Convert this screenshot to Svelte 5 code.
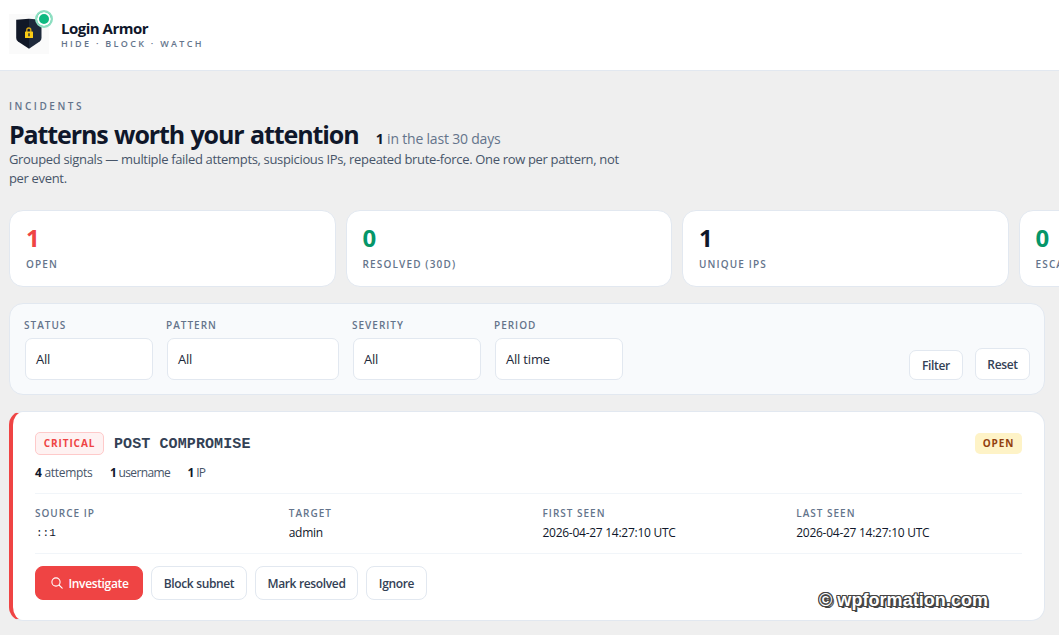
<script>
  const stats = [
    { value: 1, label: 'Open', tone: 'danger' },
    { value: 0, label: 'Resolved (30d)', tone: 'ok' },
    { value: 1, label: 'Unique IPs', tone: '' },
    { value: 0, label: 'Escalated', tone: 'ok' }
  ];

  const filters = [
    { label: 'Status', value: 'All' },
    { label: 'Pattern', value: 'All', wide: true },
    { label: 'Severity', value: 'All' },
    { label: 'Period', value: 'All time' }
  ];

  const counts = [
    { n: 4, what: 'attempts' },
    { n: 1, what: 'username' },
    { n: 1, what: 'IP' }
  ];

  const details = [
    { label: 'Source IP', value: '::1', kind: 'mono' },
    { label: 'Target', value: 'admin', kind: 'user' },
    { label: 'First seen', value: '2026-04-27 14:27:10 UTC', kind: 'date' },
    { label: 'Last seen', value: '2026-04-27 14:27:10 UTC', kind: 'date' }
  ];
</script>

<div class="page">
  <header>
    <div class="logo">
      <svg width="40" height="40" viewBox="0 0 40 40">
        <path d="M7.200 5.700 20 4.800v30L9 27.500Q7.200 26 7.200 24Z" fill="#111827" />
        <path d="M20 4.800l12.500.9V24q0 2-1.800 3.500L20 34.800Z" fill="#1e293b" />
        <path d="M17.800 18v-2q0-2 2-2t2 2v2" fill="none" stroke="#dba913" stroke-width="1.300" />
        <rect x="16" y="17.500" width="8" height="6.500" rx="0.600" fill="#facc15" />
        <path d="M19.300 19.300h1.400v3h-1.400z" fill="#1e293b" />
      </svg>
      <span class="dot"></span>
    </div>
    <div class="brand">
      <div class="name">Login Armor</div>
      <div class="tagline">Hide · Block · Watch</div>
    </div>
  </header>

  <main>
    <div class="eyebrow">Incidents</div>
    <h1>Patterns worth your attention <small><b>1</b> in the last 30 days</small></h1>
    <p class="intro">
      Grouped signals — multiple failed attempts, suspicious IPs, repeated brute-force. One row per pattern, not<br />per event.
    </p>

    <div class="stats">
      {#each stats as s}
        <div class="stat">
          <div class="value {s.tone}">{s.value}</div>
          <div class="label">{s.label}</div>
        </div>
      {/each}
    </div>

    <form class="filters">
      {#each filters as f}
        <div class="field" class:wide={f.wide}>
          <span class="label">{f.label}</span>
          <button type="button" class="select">{f.value}</button>
        </div>
      {/each}
      <div class="filter-actions">
        <button type="button" class="btn small">Filter</button>
        <button type="button" class="btn small reset">Reset</button>
      </div>
    </form>

    <article class="incident">
      <div class="head">
        <span class="severity">Critical</span>
        <h2>POST COMPROMISE</h2>
        <span class="state">Open</span>
      </div>
      <div class="counts">
        {#each counts as c}
          <span><b>{c.n}</b> {c.what}</span>
        {/each}
      </div>
      <div class="details">
        {#each details as d}
          <div>
            <div class="label">{d.label}</div>
            <div class="detail {d.kind}">{d.value}</div>
          </div>
        {/each}
      </div>
      <div class="actions">
        <button class="btn primary">
          <svg width="12" height="12" viewBox="0 0 12 12" fill="none" stroke="currentColor" stroke-width="1.100" stroke-linecap="round">
            <circle cx="5" cy="5" r="4.100" />
            <path d="M8 8l3.200 3.200" />
          </svg>
          Investigate
        </button>
        <button class="btn block">Block subnet</button>
        <button class="btn resolve">Mark resolved</button>
        <button class="btn ignore">Ignore</button>
      </div>
    </article>
  </main>

  <div class="watermark">© wpformation.com</div>
</div>

<style>
  :global(body) { background: #efefef; overflow: hidden; }

  .page {
    position: relative;
    height: 635px;
    overflow: hidden;
    font-family: "Open Sans", "Noto Sans", sans-serif;
    color: #0f172a;
    white-space: nowrap;
  }

  .page * { box-sizing: border-box; }

  header {
    display: flex;
    height: 71px;
    padding: 14px 9px 0;
    gap: 12px;
    background: #fff;
    border-bottom: 1px solid #e2e8f0;
  }

  .logo { position: relative; width: 40px; height: 40px; background: #fafafa; }
  .logo svg { display: block; }

  .dot {
    position: absolute;
    top: -4px;
    right: -4px;
    width: 18px;
    height: 18px;
    border-radius: 50%;
    background: #10b981;
    border: 2px solid #8fdfc2;
    box-shadow: inset 0 0 0 2px #fff;
  }

  .brand { padding-top: 4px; }
  .name { font-size: 15px; line-height: 20px; font-weight: 700; letter-spacing: -0.5px; }
  .tagline {
    margin-top: 1px;
    font-size: 9px;
    line-height: 10px;
    font-weight: 600;
    letter-spacing: 2.3px;
    text-transform: uppercase;
    color: #64748b;
  }

  main { padding: 28px 14px 0 9px; }

  .eyebrow {
    font-size: 10px;
    line-height: 14px;
    font-weight: 600;
    letter-spacing: 2.55px;
    text-transform: uppercase;
    color: #64748b;
  }

  h1 {
    height: 32px;
    margin: 6px 0 0;
    font-size: 25px;
    line-height: 30px;
    font-weight: 700;
    letter-spacing: -1.1px;
    word-spacing: 1px;
  }
  h1 small {
    margin-left: 11px;
    font-size: 14px;
    font-weight: 500;
    letter-spacing: -0.2px;
    word-spacing: 0;
    color: #64748b;
  }
  h1 b { color: #0f172a; }

  .intro {
    margin: -1px 0 0;
    font-size: 13px;
    line-height: 19px;
    letter-spacing: -0.335px;
    color: #475569;
  }

  .stats {
    display: grid;
    grid-template-columns: repeat(4, 326.5px);
    gap: 10px;
    margin-top: 22px;
  }

  .stat {
    height: 77px;
    padding: 15px 16px;
    background: #fff;
    border: 1px solid #e2e8f0;
    border-radius: 14px;
  }
  .value { font-size: 24px; line-height: 24px; font-weight: 700; letter-spacing: -0.5px; }
  .danger { color: #ef4444; }
  .ok { color: #059669; }

  .label {
    font-size: 10px;
    line-height: 14px;
    font-weight: 600;
    letter-spacing: 1px;
    text-transform: uppercase;
    color: #64748b;
  }
  .stat .label { margin-top: 7px; letter-spacing: 1.15px; }

  .filters {
    display: flex;
    gap: 12px;
    height: 92px;
    margin-top: 16px;
    padding: 14px;
    background: #f8fafc;
    border: 1px solid #e2e8f0;
    border-radius: 14px;
  }

  .field { display: flex; flex-direction: column; width: 130px; }
  .field.wide { width: 174px; }

  .select {
    height: 42px;
    margin: 6px 1px 0;
    padding: 0 10px;
    font: inherit;
    font-size: 13px;
    letter-spacing: -0.2px;
    text-align: left;
    color: #1e293b;
    background: #fff;
    border: 1px solid #e2e8f0;
    border-radius: 7px;
  }

  .filter-actions { display: flex; gap: 12px; align-items: flex-end; margin-left: auto; }

  .btn {
    display: flex;
    align-items: center;
    justify-content: center;
    height: 34px;
    padding: 0;
    font: inherit;
    font-size: 12px;
    font-weight: 600;
    letter-spacing: -0.35px;
    color: #334155;
    background: #fff;
    border: 1px solid #e2e8f0;
    border-radius: 8px;
  }
  .small { width: 54px; height: 30px; border-radius: 7px; }
  .small.reset { width: 55px; height: 32px; }

  .incident {
    height: 210px;
    margin-top: 16px;
    padding: 20px 22px 0;
    background: #fff;
    border: 1px solid #e2e8f0;
    border-left: 4px solid #ef4444;
    border-radius: 14px;
  }

  .head { display: flex; align-items: center; height: 23px; }

  .severity, .state {
    display: flex;
    align-items: center;
    justify-content: center;
    padding-bottom: 1px;
    font-size: 10px;
    line-height: 14px;
    font-weight: 700;
    letter-spacing: 0.9px;
    text-transform: uppercase;
    border-radius: 5px;
  }
  .severity {
    width: 69px;
    height: 23px;
    color: #ef4444;
    background: #fef2f2;
    border: 1px solid #fecaca;
  }
  .state { width: 47px; height: 21px; margin-left: auto; color: #92400e; background: #fef3c7; }

  h2 {
    margin: 1px 0 0 10px;
    font-family: "Liberation Mono", monospace;
    font-size: 15px;
    font-weight: 700;
    letter-spacing: 0.1px;
    color: #334155;
  }

  .counts {
    display: flex;
    gap: 17.5px;
    height: 39px;
    padding-top: 9px;
    font-size: 12px;
    line-height: 18px;
    letter-spacing: -0.3px;
    color: #475569;
    border-bottom: 1px solid #f1f5f9;
  }
  .counts b { color: #0f172a; }
  .counts span + span { letter-spacing: -0.65px; }

  .details {
    display: grid;
    grid-template-columns: repeat(4, 1fr);
    gap: 28px;
    height: 60px;
    padding-top: 12px;
    border-bottom: 1px solid #f1f5f9;
  }

  .detail { margin-top: 4px; font-size: 12px; line-height: 18px; letter-spacing: -0.27px; }
  .detail.mono {
    padding-left: 1px;
    font-family: "Liberation Mono", monospace;
    font-size: 11px;
    line-height: 18px;
    letter-spacing: 0;
  }
  .detail.user { letter-spacing: -0.3px; }

  .actions { display: flex; gap: 8px; padding-top: 12px; }
  .primary { gap: 6px; width: 108px; padding-left: 1px; color: #fff; background: #ef4444; border-color: #ef4444; }
  .block { width: 96px; }
  .resolve { width: 103px; }
  .ignore { width: 61px; }

  .watermark {
    position: absolute;
    left: 819px;
    top: 589px;
    font-family: "Liberation Sans", sans-serif;
    font-size: 18px;
    line-height: 22px;
    font-weight: 700;
    letter-spacing: 0.05px;
    color: #fff;
    text-shadow: 1px 0 #444, -1px 0 #444, 0 1px #444, 0 -1px #444, 1px 1px #444, -1px -1px #444, 1px -1px #444, -1px 1px #444, 2px 2px #444;
  }
</style>
